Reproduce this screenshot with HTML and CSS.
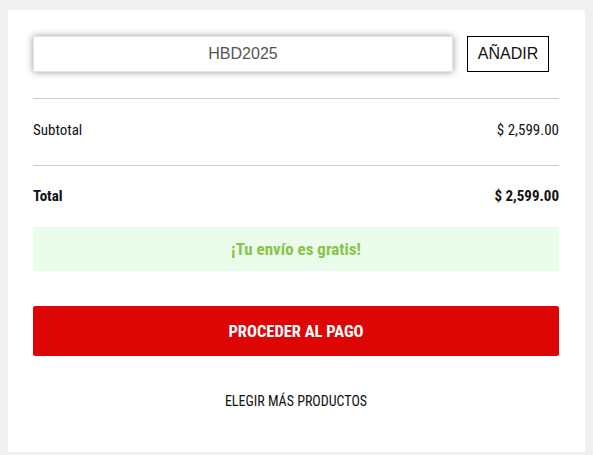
FILE: index.html
```html
<!DOCTYPE html>
<html lang="es">
<head>
<meta charset="utf-8">
<title>Carrito</title>
<link rel="stylesheet" href="styles.css">
</head>
<body>
<div class="card">
  <div class="coupon">
    <input class="coupon-input" type="text" value="HBD2025">
    <button class="coupon-btn">AÑADIR</button>
  </div>
  <div class="row subtotal">
    <span>Subtotal</span>
    <span>$ 2,599.00</span>
  </div>
  <div class="row total">
    <span>Total</span>
    <span>$ 2,599.00</span>
  </div>
  <div class="free">¡Tu envío es gratis!</div>
  <button class="pay">PROCEDER AL PAGO</button>
  <div class="more">ELEGIR MÁS PRODUCTOS</div>
</div>
</body>
</html>
```
FILE: styles.css
```css
html, body {
  margin: 0;
  padding: 0;
  background: #f0f0f0;
}
body {
  font-family: "Roboto Condensed", "Liberation Sans Narrow", "DejaVu Sans Condensed", sans-serif;
  color: #111;
}
.card {
  background: #fff;
  margin: 10px 8px 3px 8px;
  padding: 26px 26px 36px 25px;
  height: 442px;
  box-sizing: border-box;
}
.coupon {
  display: flex;
  align-items: center;
  gap: 14px;
  padding-bottom: 26px;
  border-bottom: 1px solid #cccccc;
}
.coupon-input {
  width: 420px;
  height: 36px;
  box-sizing: border-box;
  border: 1px solid #e4e4e4;
  box-shadow: 0 0 7px rgba(0, 0, 0, 0.4);
  font-family: "Liberation Sans", Arial, sans-serif;
  font-size: 16px;
  color: #555;
  text-align: center;
  outline: none;
  padding: 0;
}
.coupon-btn {
  width: 82px;
  height: 36px;
  background: #fff;
  border: 1px solid #000;
  font-family: "Liberation Sans", Arial, sans-serif;
  font-size: 16px;
  color: #111;
  padding: 0;
}
.row {
  display: flex;
  justify-content: space-between;
  font-size: 15px;
  line-height: 18px;
}
.subtotal {
  padding: 22px 0 26px;
  border-bottom: 1px solid #cccccc;
}
.total {
  padding: 21px 0 22px;
  font-weight: bold;
}
.free {
  height: 44px;
  background: #eafdea;
  color: #8bc34a;
  font-weight: bold;
  font-size: 17px;
  display: flex;
  align-items: center;
  justify-content: center;
}
.pay {
  display: block;
  width: 100%;
  height: 50px;
  margin-top: 35px;
  background: #de0505;
  color: #fff;
  border: none;
  border-radius: 2px;
  font-family: inherit;
  font-weight: bold;
  font-size: 16.5px;
}
.more {
  text-align: center;
  font-size: 14px;
  line-height: 18px;
  margin-top: 36px;
}
```
